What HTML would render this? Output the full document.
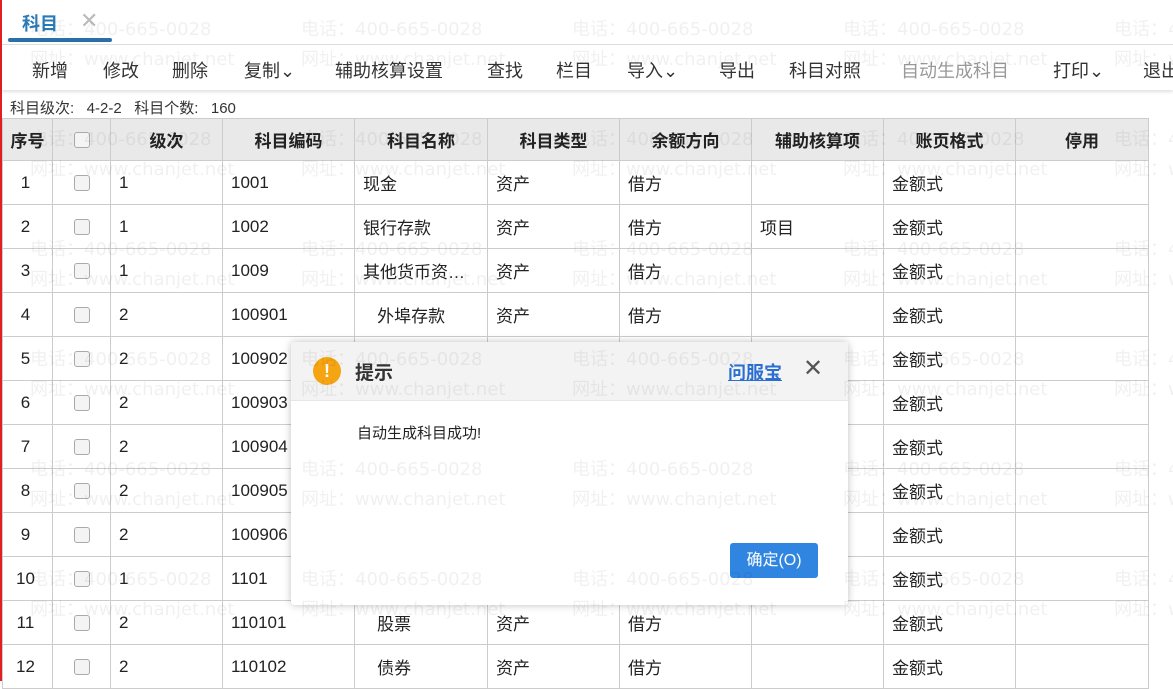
<!DOCTYPE html>
<html><head><meta charset="utf-8"><style>
body{margin:0;width:1173px;height:681px;overflow:hidden;background:#fff;font-family:"Liberation Sans","Noto Sans CJK SC",sans-serif;position:relative;color:#222}
.redl{position:absolute;left:0;top:0;width:2px;height:681px;background:#e02020}
.tab{position:absolute;left:22px;top:10px;font-size:18px;color:#2a7ab8;font-weight:bold}
.tabx{position:absolute;left:80px;top:8px;font-size:22px;color:#bbb}
.tabline{position:absolute;left:8px;top:38px;width:104px;height:4px;background:#2a6fa8;border-radius:2px}
.sep{position:absolute;left:2px;top:44px;width:1171px;height:1px;background:#ddd}
.tb{position:absolute;left:2px;top:46px;width:1171px;height:44px;background:#fff;box-shadow:0 2px 3px rgba(0,0,0,.12)}
.tb span{position:absolute;top:11px;font-size:18px;color:#333;white-space:nowrap}
.info{position:absolute;left:10px;top:97px;font-size:15px;color:#333}
table{position:absolute;left:2px;top:118px;border-collapse:collapse;font-size:17px;table-layout:fixed;width:1146px}
td,th{border:1px solid #ccc;height:43px;padding:0 0 0 8px;text-align:left;color:#222;white-space:nowrap;overflow:hidden}
th{background:#e9e9e9;font-weight:bold;text-align:center;padding:0;height:41px}
td.n{text-align:center;padding:0 4px 0 0}
td.c{text-align:center;padding:0}
.cb{display:inline-block;width:14px;height:14px;border:1px solid #aaa;border-radius:3px;background:#f4f4f4;vertical-align:middle}
.wm{position:absolute;font-family:"DejaVu Sans","Noto Sans CJK SC",sans-serif;font-size:18px;color:rgba(0,0,0,.06);white-space:nowrap;line-height:30px;pointer-events:none;z-index:5}
.dlg{position:absolute;left:291px;top:342px;width:557px;height:263px;background:#fff;box-shadow:0 0 8px rgba(0,0,0,.25);border-radius:3px;z-index:3}
.dh{height:58px;background:#f3f3f3;border-bottom:1px solid #e6e6e6;position:relative}
</style></head><body>
<div class="redl"></div>
<div class="tab">科目</div><div class="tabx">✕</div><div class="tabline"></div><div class="sep"></div>
<div class="tb">
<span style="left:30px">新增</span><span style="left:101px">修改</span><span style="left:170px">删除</span><span style="left:242px">复制⌄</span><span style="left:333px">辅助核算设置</span><span style="left:485px">查找</span><span style="left:554px">栏目</span><span style="left:625px">导入⌄</span><span style="left:717px">导出</span><span style="left:787px">科目对照</span><span style="left:899px;color:#999">自动生成科目</span><span style="left:1051px">打印⌄</span><span style="left:1141px">退出</span>
</div>
<div class="info">科目级次:&nbsp;&nbsp; 4-2-2&nbsp;&nbsp; 科目个数:&nbsp;&nbsp; 160</div>
<table>
<colgroup><col style="width:50px"><col style="width:58px"><col style="width:112px"><col style="width:132px"><col style="width:133px"><col style="width:132px"><col style="width:132px"><col style="width:132px"><col style="width:132px"><col style="width:133px"></colgroup>
<tr><th>序号</th><th><span class="cb"></span></th><th>级次</th><th>科目编码</th><th>科目名称</th><th>科目类型</th><th>余额方向</th><th>辅助核算项</th><th>账页格式</th><th>停用</th></tr>
<tr><td class="n">1</td><td class="c"><span class="cb"></span></td><td>1</td><td>1001</td><td>现金</td><td>资产</td><td>借方</td><td></td><td>金额式</td><td></td></tr>
<tr><td class="n">2</td><td class="c"><span class="cb"></span></td><td>1</td><td>1002</td><td>银行存款</td><td>资产</td><td>借方</td><td>项目</td><td>金额式</td><td></td></tr>
<tr><td class="n">3</td><td class="c"><span class="cb"></span></td><td>1</td><td>1009</td><td>其他货币资…</td><td>资产</td><td>借方</td><td></td><td>金额式</td><td></td></tr>
<tr><td class="n">4</td><td class="c"><span class="cb"></span></td><td>2</td><td>100901</td><td>&nbsp;&nbsp; 外埠存款</td><td>资产</td><td>借方</td><td></td><td>金额式</td><td></td></tr>
<tr><td class="n">5</td><td class="c"><span class="cb"></span></td><td>2</td><td>100902</td><td></td><td></td><td></td><td></td><td>金额式</td><td></td></tr>
<tr><td class="n">6</td><td class="c"><span class="cb"></span></td><td>2</td><td>100903</td><td></td><td></td><td></td><td></td><td>金额式</td><td></td></tr>
<tr><td class="n">7</td><td class="c"><span class="cb"></span></td><td>2</td><td>100904</td><td></td><td></td><td></td><td></td><td>金额式</td><td></td></tr>
<tr><td class="n">8</td><td class="c"><span class="cb"></span></td><td>2</td><td>100905</td><td></td><td></td><td></td><td></td><td>金额式</td><td></td></tr>
<tr><td class="n">9</td><td class="c"><span class="cb"></span></td><td>2</td><td>100906</td><td></td><td></td><td></td><td></td><td>金额式</td><td></td></tr>
<tr><td class="n">10</td><td class="c"><span class="cb"></span></td><td>1</td><td>1101</td><td></td><td></td><td></td><td></td><td>金额式</td><td></td></tr>
<tr><td class="n">11</td><td class="c"><span class="cb"></span></td><td>2</td><td>110101</td><td>&nbsp;&nbsp; 股票</td><td>资产</td><td>借方</td><td></td><td>金额式</td><td></td></tr>
<tr><td class="n">12</td><td class="c"><span class="cb"></span></td><td>2</td><td>110102</td><td>&nbsp;&nbsp; 债券</td><td>资产</td><td>借方</td><td></td><td>金额式</td><td></td></tr>
</table>
<div class="dlg">
<div class="dh">
<div style="position:absolute;left:22px;top:15px;width:28px;height:28px;border-radius:50%;background:#f5a412;color:#fff;font-weight:bold;text-align:center;line-height:28px;font-size:18px">!</div>
<div style="position:absolute;left:64px;top:16px;font-size:19px;color:#333;font-weight:bold">提示</div>
<div style="position:absolute;left:437px;top:17px;font-size:18px;color:#2a6fd0;text-decoration:underline;font-weight:bold">问服宝</div>
<div style="position:absolute;left:512px;top:12px;font-size:24px;color:#555">✕</div>
</div>
<div style="position:absolute;left:66px;top:80px;font-size:15px;color:#222">自动生成科目成功!</div>
<div style="position:absolute;left:439px;top:201px;width:88px;height:35px;background:#2f85e0;border-radius:3px;color:#fff;font-size:16px;text-align:center;line-height:35px">确定(O)</div>
</div>
<div id="wm"></div>
<script>
var h='';for(var r=0;r<6;r++)for(var c=0;c<5;c++){h+='<div class="wm" style="left:'+(30+c*271)+'px;top:'+(15+r*110)+'px">电话：400-665-0028<br>网址：www.chanjet.net</div>';}
document.getElementById('wm').innerHTML=h;
</script>
</body></html>
